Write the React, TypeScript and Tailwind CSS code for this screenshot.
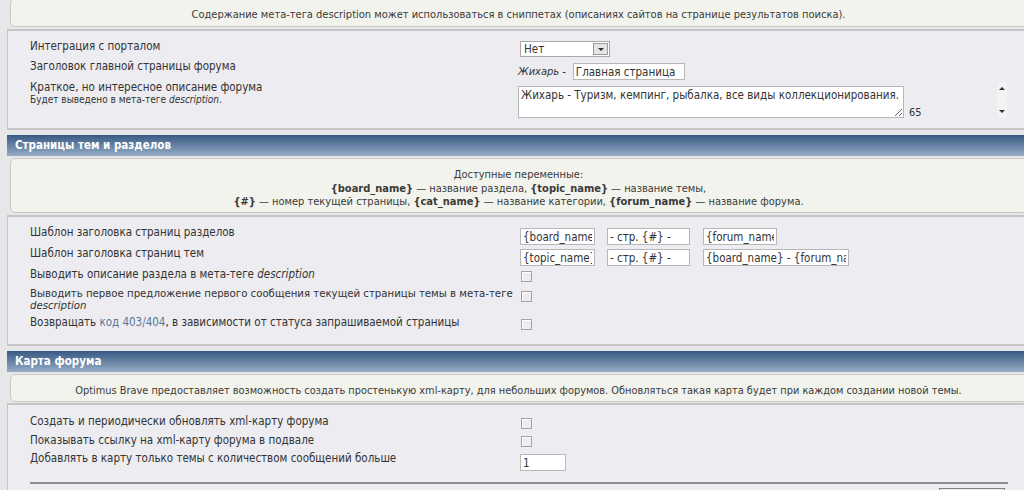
import React from "react";

const Chk = () => (
  <span className="block w-[11px] h-[11px] border border-[#a3a3a3] bg-[#ededed] shadow-[inset_1px_1px_0_#ffffff]" />
);

const Header = ({ title }: { title: string }) => (
  <div className="h-[22px] flex items-center pl-[8px] bg-gradient-to-b from-[#395a84] to-[#97adc5] border-b border-[#dfe5eb] text-white font-bold text-[11.5px] leading-[13px]">
    {title}
  </div>
);

const Info = ({ children, cls }: { children: React.ReactNode; cls: string }) => (
  <div className={"mx-[3px] border border-[#c9c9c4] rounded-[5px] bg-[#f3f3ed] text-center text-[#3a3a3a] " + cls}>
    {children}
  </div>
);

const inp = "block h-[17px] border border-[#b7b7b7] bg-white px-[2px] text-[11.5px] leading-[13px] text-[#333] outline-none font-['DejaVu_Sans_Condensed','DejaVu_Sans',sans-serif]";

export default function App() {
  return (
    <div className="w-[1024px] h-[490px] overflow-hidden bg-[#e7e7ea] text-[#333] font-['DejaVu_Sans_Condensed','DejaVu_Sans',sans-serif]">
      <div className="ml-[7px] w-[1023px]">
        {/* Section 1 */}
        <Info cls="-mt-[2px] h-[29px] pt-[9px] leading-[13px] text-[11px]">
          Содержание мета-тега description может использоваться в сниппетах (описаниях сайтов на странице результатов поиска).
        </Info>
        <div className="mt-[2px] bg-[#ececf1] border-t-2 border-b-2 border-l border-[#c6c6c9] pt-[8px] pb-[10px] px-[22px] text-[11.5px]">
          <div className="flex h-[21px]">
            <div className="w-[488px] pt-[1px] leading-[13px]">Интеграция с порталом</div>
            <div className="pt-[2px] pl-[2px]">
              <div className="flex items-center w-[90px] h-[16px] border border-[#a9a9a9] bg-white">
                <span className="flex-1 pl-[3px] text-[11.5px] leading-[13px]">Нет</span>
                <span className="mr-[1px] w-[15px] h-[12px] border border-[#9c9c9c] bg-[#e4e4e4] flex items-center justify-center">
                  <span className="block w-0 h-0 border-l-[3px] border-r-[3px] border-t-[3px] border-l-transparent border-r-transparent border-t-[#333]" />
                </span>
              </div>
            </div>
          </div>
          <div className="flex h-[21px]">
            <div className="w-[488px] pt-[0px] leading-[13px]">Заголовок главной страницы форума</div>
            <div className="pt-[2px] flex items-center">
              <span className="italic text-[11px] leading-[13px] mr-[7px]">Жихарь -</span>
              <input readOnly value="Главная страница" className={inp + " w-[112px]"} />
            </div>
          </div>
          <div className="flex h-[37px]">
            <div className="w-[488px]">
              <div className="leading-[13px]">Краткое, но интересное описание форума</div>
              <div className="text-[10px] leading-[11px]">
                Будет выведено в мета-теге <i>description</i>.
              </div>
            </div>
            <div className="flex-1 flex">
              <div className="pt-[3px] flex items-end">
                <textarea
                  readOnly
                  value="Жихарь - Туризм, кемпинг, рыбалка, все виды коллекционирования."
                  className="block w-[386px] h-[32px] border border-[#b7b7b7] bg-white px-[2px] pt-[1px] text-[11.5px] leading-[14px] text-[#333] outline-none overflow-hidden font-['DejaVu_Sans_Condensed','DejaVu_Sans',sans-serif]"
                />
                <span className="ml-[5px] text-[11px] leading-[13px] -mb-[1px]">65</span>
              </div>
              <div className="ml-auto mr-[1px] mt-[1px] w-[10px] h-[36px] bg-[#f3f3f4] flex flex-col items-center justify-between py-[5px]">
                <span className="block w-0 h-0 border-l-[3px] border-r-[3px] border-b-[3px] border-l-transparent border-r-transparent border-b-[#333]" />
                <span className="block w-0 h-0 border-l-[3px] border-r-[3px] border-t-[3px] border-l-transparent border-r-transparent border-t-[#333]" />
              </div>
            </div>
          </div>
        </div>

        {/* Section 2 */}
        <div className="mt-[5px]">
          <Header title="Страницы тем и разделов" />
        </div>
        <Info cls="mt-[1px] h-[55px] pt-[9px] leading-[13.5px] text-[11px]">
          <div>Доступные переменные:</div>
          <div>
            <b>{"{board_name}"}</b> — название раздела, <b>{"{topic_name}"}</b> — название темы,
          </div>
          <div>
            <b>{"{#}"}</b> — номер текущей страницы, <b>{"{cat_name}"}</b> — название категории, <b>{"{forum_name}"}</b> — название форума.
          </div>
        </Info>
        <div className="mt-[2px] bg-[#ececf1] border-t-2 border-b-2 border-l border-[#c6c6c9] pt-[9px] pb-[7px] px-[22px] text-[11.5px]">
          <div className="flex h-[21px]">
            <div className="w-[488px] leading-[13px]">Шаблон заголовка страниц разделов</div>
            <div className="pt-[2px] pl-[2px] flex">
              <input readOnly value="{board_name}" className={inp + " w-[75px]"} />
              <input readOnly value="- стр. {#} -" className={inp + " w-[83px] ml-[12px]"} />
              <input readOnly value="{forum_name}" className={inp + " w-[74px] ml-[13px]"} />
            </div>
          </div>
          <div className="flex h-[21px]">
            <div className="w-[488px] leading-[13px]">Шаблон заголовка страниц тем</div>
            <div className="pt-[2px] pl-[2px] flex">
              <input readOnly value="{topic_name}" className={inp + " w-[75px]"} />
              <input readOnly value="- стр. {#} -" className={inp + " w-[83px] ml-[12px]"} />
              <input readOnly value="{board_name} - {forum_name}" className={inp + " w-[146px] ml-[13px]"} />
            </div>
          </div>
          <div className="flex h-[20px]">
            <div className="w-[488px] leading-[13px]">
              Выводить описание раздела в мета-теге <i>description</i>
            </div>
            <div className="pt-[3px] pl-[3px]">
              <Chk />
            </div>
          </div>
          <div className="flex h-[28px]">
            <div className="w-[488px] leading-[12px] text-[11.3px]">
              <div className="whitespace-nowrap">Выводить первое предложение первого сообщения текущей страницы темы в мета-теге</div>
              <div><i>description</i></div>
            </div>
            <div className="pt-[3px] pl-[3px]">
              <Chk />
            </div>
          </div>
          <div className="flex h-[21px]">
            <div className="w-[488px] leading-[13px]">
              Возвращать <span className="text-[#56779a]">код 403/404</span>, в зависимости от статуса запрашиваемой страницы
            </div>
            <div className="pt-[3px] pl-[3px]">
              <Chk />
            </div>
          </div>
        </div>

        {/* Section 3 */}
        <div className="mt-[5px]">
          <Header title="Карта форума" />
        </div>
        <Info cls="mt-[1px] h-[28px] pt-[9px] leading-[13px] text-[10.9px]">
          Optimus Brave предоставляет возможность создать простенькую xml-карту, для небольших форумов. Обновляться такая карта будет при каждом создании новой темы.
        </Info>
        <div className="mt-[1px] bg-[#ececf1] border-t-2 border-l border-[#c6c6c9] pt-[10px] px-[22px] text-[11.5px] h-[120px]">
          <div className="flex h-[19px]">
            <div className="w-[488px] leading-[13px]">Создать и периодически обновлять xml-карту форума</div>
            <div className="pt-[3px] pl-[3px]">
              <Chk />
            </div>
          </div>
          <div className="flex h-[18px]">
            <div className="w-[488px] leading-[13px]">Показывать ссылку на xml-карту форума в подвале</div>
            <div className="pt-[2px] pl-[3px]">
              <Chk />
            </div>
          </div>
          <div className="flex h-[20px]">
            <div className="w-[488px] leading-[13px]">Добавлять в карту только темы с количеством сообщений больше</div>
            <div className="pt-[2px] pl-[2px]">
              <input readOnly value="1" className={inp + " w-[46px] text-[#4a2b4a]"} />
            </div>
          </div>
          <div className="mt-[10px] border-t-2 border-[#8e8e8e]" />
          <div className="flex justify-end mt-[4px]">
            <div className="mr-[3px] w-[66px] h-[20px] border border-[#7f7f7f] bg-[#efefef]" />
          </div>
        </div>
      </div>
    </div>
  );
}
